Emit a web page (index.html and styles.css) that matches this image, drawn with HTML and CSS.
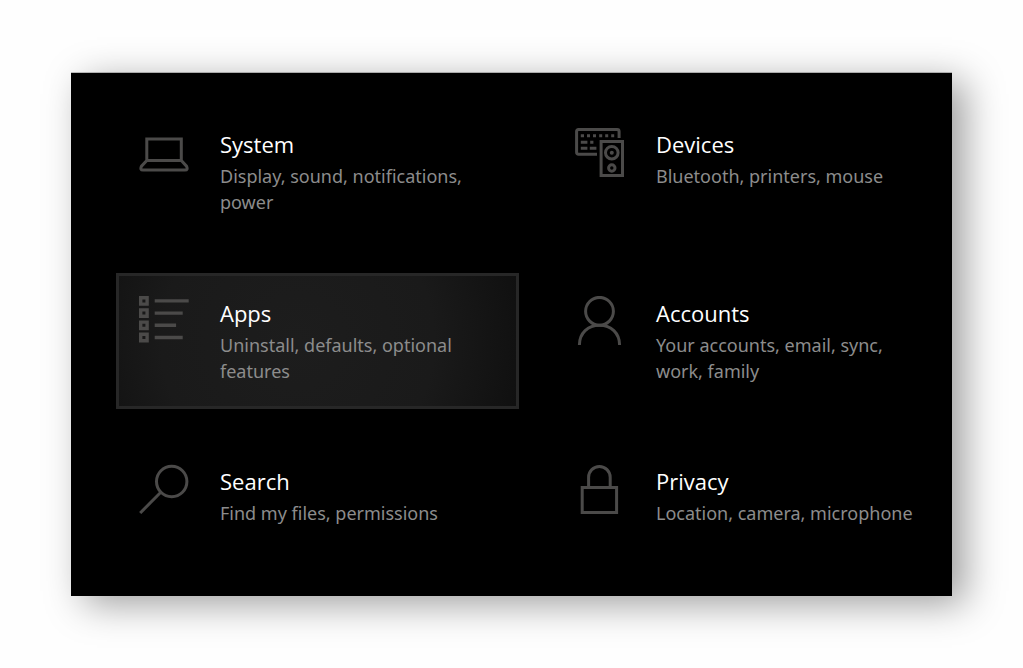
FILE: index.html
```html
<!DOCTYPE html>
<html lang="en">
<head>
<meta charset="utf-8">
<meta name="viewport" content="width=device-width, initial-scale=1">
<title>Settings</title>
<link rel="stylesheet" href="styles.css">
</head>
<body class="page">
<main class="panel">
  <a class="tile" href="#system">
    <svg class="icon" viewBox="0 0 50 50" aria-hidden="true"><path d="M7.8 33.4V12h34.5v21.4M7.8 33.4h34.5l5.2 5.8q1.8 3.9-1.5 3.9H4q-3.3 0-1.5-3.9z"/></svg>
    <span class="text"><span class="title">System</span><span class="detail">Display, sound, notifications, power</span></span>
  </a>
  <a class="tile" href="#devices">
    <svg class="icon" viewBox="0 0 50 50" aria-hidden="true"><path d="M22 27.2H3.5Q1.6 27.2 1.6 25.3V4.5Q1.6 2.6 3.5 2.6h38.7Q44.1 2.6 44.1 4.5V11M26.1 14.6h21.4v33.8H26.1z"/><path d="M5.8 8.8h3.2m3 0h3m3 0h3m3.2 0h3m3 0h3m3 0h3M5.8 15.2h6.6m2.8 0h3.2M5.8 21.2h6.6m2.4 0h6.6"/><circle cx="36.8" cy="25.7" r="6.3"/><circle class="solid" cx="36.8" cy="25.7" r="2"/><circle cx="36.8" cy="41" r="3.2"/></svg>
    <span class="text"><span class="title">Devices</span><span class="detail">Bluetooth, printers, mouse</span></span>
  </a>
  <a class="tile tile-active" href="#apps">
    <svg class="icon" viewBox="0 0 50 50" aria-hidden="true"><path class="heavy" d="M1.7 1.7h6.4v6.4H1.7zM1.7 13.9h6.4v6.4H1.7zM1.7 26.1h6.4v6.4H1.7zM1.7 38.3h6.4v6.4H1.7z"/><path class="heavy" d="M15.7 4.9h34M15.7 17.1h28M15.7 29.3h21.4M15.7 41.5h28"/></svg>
    <span class="text"><span class="title">Apps</span><span class="detail">Uninstall, defaults, optional features</span></span>
  </a>
  <a class="tile" href="#accounts">
    <svg class="icon" viewBox="0 0 50 50" aria-hidden="true"><circle cx="24.5" cy="15.3" r="13.9"/><path d="M4.4 49C4.4 37 13 29.2 24.5 29.2S44.6 37 44.6 49"/></svg>
    <span class="text"><span class="title">Accounts</span><span class="detail">Your accounts, email, sync, work, family</span></span>
  </a>
  <a class="tile" href="#search">
    <svg class="icon" viewBox="0 0 50 50" aria-hidden="true"><circle cx="32.7" cy="17.5" r="15.2"/><path d="M21.8 28.2L1.2 49"/></svg>
    <span class="text"><span class="title">Search</span><span class="detail">Find my files, permissions</span></span>
  </a>
  <a class="tile" href="#privacy">
    <svg class="icon" viewBox="0 0 50 50" aria-hidden="true"><path d="M7.2 23.5h34.4v25H7.2zM13.6 23.5V13.3a10.8 10.8 0 0 1 21.6 0v10.2"/></svg>
    <span class="text"><span class="title">Privacy</span><span class="detail">Location, camera, microphone</span></span>
  </a>
</main>
</body>
</html>
```
FILE: styles.css
```css
* {
  box-sizing: border-box;
}

.page {
  display: flex;
  min-height: 100vh;
  margin: 0;
  padding: 73px 71px 72px;
  background: #fefefe;
  font-family: "Segoe UI", "Noto Sans", "Open Sans", sans-serif;
}

.panel {
  flex: 1;
  display: grid;
  grid-template-columns: 403fr 393fr;
  column-gap: 33px;
  align-content: space-between;
  padding: 31px 7px 19px 45px;
  background: #000;
  box-shadow: 13px 8px 36px rgba(0, 0, 0, 0.38), 0 -1px 0 #c4c4c4;
}

.tile {
  display: flex;
  align-items: flex-start;
  gap: 31px;
  min-height: 136px;
  padding: 20px;
  border: 3px solid transparent;
  color: #fff;
  text-decoration: none;
}

.tile-active {
  border-color: #272727;
  background: radial-gradient(circle at 45% 50%, #1d1d1d 0%, #1a1a1a 60%, #101010 100%);
}

.icon {
  flex: none;
  width: 50px;
  height: 50px;
  fill: none;
  stroke: #4b4a49;
  stroke-width: 3;
}

.heavy {
  stroke-width: 3.4;
}

.solid {
  fill: #4b4a49;
  stroke: none;
}

.text {
  display: flex;
  flex-direction: column;
  gap: 2px;
}

.title {
  font-family: "Segoe UI", "Open Sans", sans-serif;
  font-size: 22px;
  line-height: 34px;
}

.detail {
  color: #8c8c8c;
  font-size: 18px;
  line-height: 26px;
}
```
